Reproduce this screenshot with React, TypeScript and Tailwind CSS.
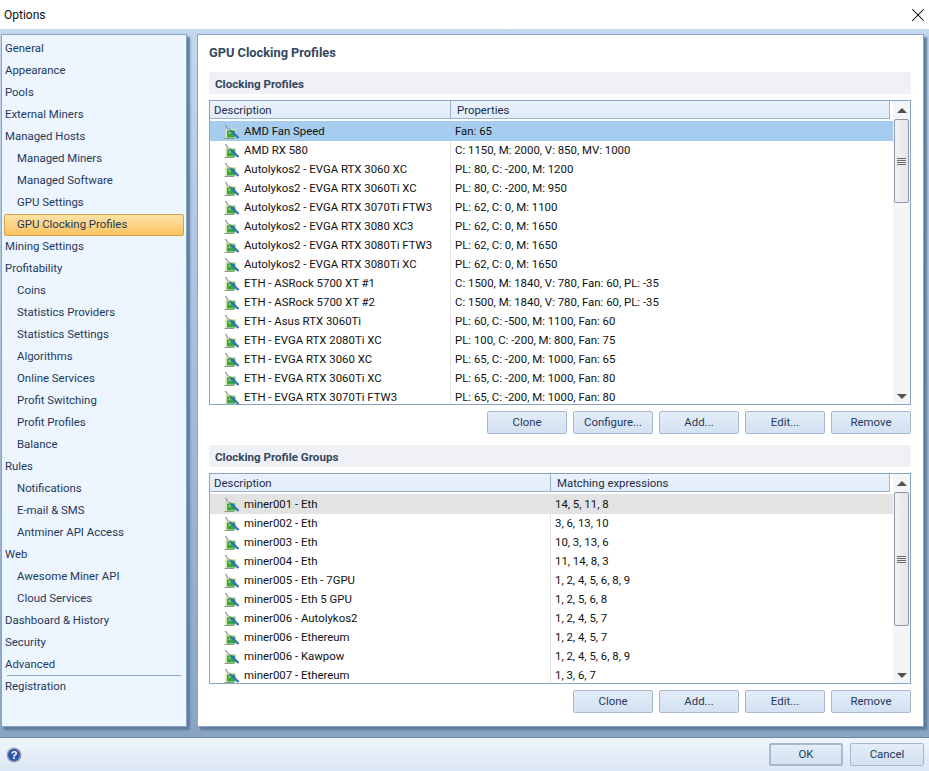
import { X } from "lucide-react";

const navItems: [string, boolean][] = [
  ["General", false],
  ["Appearance", false],
  ["Pools", false],
  ["External Miners", false],
  ["Managed Hosts", false],
  ["Managed Miners", true],
  ["Managed Software", true],
  ["GPU Settings", true],
  ["GPU Clocking Profiles", true],
  ["Mining Settings", false],
  ["Profitability", false],
  ["Coins", true],
  ["Statistics Providers", true],
  ["Statistics Settings", true],
  ["Algorithms", true],
  ["Online Services", true],
  ["Profit Switching", true],
  ["Profit Profiles", true],
  ["Balance", true],
  ["Rules", false],
  ["Notifications", true],
  ["E-mail & SMS", true],
  ["Antminer API Access", true],
  ["Web", false],
  ["Awesome Miner API", true],
  ["Cloud Services", true],
  ["Dashboard & History", false],
  ["Security", false],
  ["Advanced", false],
];

const profiles = [
  ["AMD Fan Speed", "Fan: 65"],
  ["AMD RX 580", "C: 1150, M: 2000, V: 850, MV: 1000"],
  ["Autolykos2 - EVGA RTX 3060 XC", "PL: 80, C: -200, M: 1200"],
  ["Autolykos2 - EVGA RTX 3060Ti XC", "PL: 80, C: -200, M: 950"],
  ["Autolykos2 - EVGA RTX 3070Ti FTW3", "PL: 62, C: 0, M: 1100"],
  ["Autolykos2 - EVGA RTX 3080 XC3", "PL: 62, C: 0, M: 1650"],
  ["Autolykos2 - EVGA RTX 3080Ti FTW3", "PL: 62, C: 0, M: 1650"],
  ["Autolykos2 - EVGA RTX 3080Ti XC", "PL: 62, C: 0, M: 1650"],
  ["ETH - ASRock 5700 XT #1", "C: 1500, M: 1840, V: 780, Fan: 60, PL: -35"],
  ["ETH - ASRock 5700 XT #2", "C: 1500, M: 1840, V: 780, Fan: 60, PL: -35"],
  ["ETH - Asus RTX 3060Ti", "PL: 60, C: -500, M: 1100, Fan: 60"],
  ["ETH - EVGA RTX 2080Ti XC", "PL: 100, C: -200, M: 800, Fan: 75"],
  ["ETH - EVGA RTX 3060 XC", "PL: 65, C: -200, M: 1000, Fan: 65"],
  ["ETH - EVGA RTX 3060Ti XC", "PL: 65, C: -200, M: 1000, Fan: 80"],
  ["ETH - EVGA RTX 3070Ti FTW3", "PL: 65, C: -200, M: 1000, Fan: 80"],
];

const groups = [
  ["miner001 - Eth", "14, 5, 11, 8"],
  ["miner002 - Eth", "3, 6, 13, 10"],
  ["miner003 - Eth", "10, 3, 13, 6"],
  ["miner004 - Eth", "11, 14, 8, 3"],
  ["miner005 - Eth - 7GPU", "1, 2, 4, 5, 6, 8, 9"],
  ["miner005 - Eth 5 GPU", "1, 2, 5, 6, 8"],
  ["miner006 - Autolykos2", "1, 2, 4, 5, 7"],
  ["miner006 - Ethereum", "1, 2, 4, 5, 7"],
  ["miner006 - Kawpow", "1, 2, 4, 5, 6, 8, 9"],
  ["miner007 - Ethereum", "1, 3, 6, 7"],
];

function RowIcon() {
  return (
    <svg width="16" height="16" viewBox="0 0 16 16" className="shrink-0">
      <path d="M1.5 1l3 5" stroke="#8f938f" strokeWidth="1.3" fill="none" />
      <rect x="1.5" y="5" width="10.5" height="9" fill="#d6e6a8" />
      <rect x="3" y="6.5" width="8" height="7" fill="#3aa648" />
      <path d="M4.5 8h2v2h-2z" fill="#8fd07a" />
      <path d="M0.5 14.5h10" stroke="#8d9a88" strokeWidth="1" />
      <path d="M7 6.5l7.5 7.5" stroke="#2b6fc0" strokeWidth="2.2" />
      <path d="M5 5l2 2" stroke="#7d8a9a" strokeWidth="1.4" />
    </svg>
  );
}

function Btn({ label, wide }: { label: string; wide?: boolean }) {
  return (
    <button
      className={`h-[23px] rounded-[2px] border border-[#a8b8ce] bg-gradient-to-b from-[#e4edf8] to-[#d3e1f2] pt-[1px] text-[11.4px] text-[#1e395b] ${
        wide ? "w-[74px]" : "w-[80px]"
      }`}
    >
      {label}
    </button>
  );
}

function ListTable({
  rows,
  colWidth,
  height,
  selected,
  thumb,
  second,
}: {
  rows: string[][];
  colWidth: string;
  height: string;
  selected: string;
  thumb: string;
  second: string;
}) {
  return (
    <div className={`flex ${height} border border-[#8aa4c4] bg-white`}>
      <div className="min-w-0 flex-1 overflow-hidden">
        <div className="mr-[3px] flex h-[18px] border-b border-r border-[#9db4d0] bg-gradient-to-b from-[#eaf2fb] to-[#e2edf9] text-[11.4px] leading-[19px] text-[#1c2c4a]">
          <div className={`${colWidth} shrink-0 border-r border-[#9db4d0] pl-[4px]`}>Description</div>
          <div className="pl-[6px]">{second}</div>
        </div>
        <div className="pt-[2px]">
          {rows.map((r, i) => (
            <div
              key={r[0]}
              className={`flex items-center text-[11.4px] text-[#111] ${i === 0 ? `h-[20px] pt-[1px] ${selected}` : "h-[19px] border-r-[3px] border-white"}`}
            >
              <div className={`${colWidth} flex h-full shrink-0 items-center gap-[3px] border-r border-[#e3e3e3] pl-[14px] ${i === 0 ? "border-transparent" : ""}`}>
                <RowIcon />
                <span className="ml-[1px] whitespace-nowrap">{r[0]}</span>
              </div>
              <div className="whitespace-nowrap pl-[4px]">{r[1]}</div>
            </div>
          ))}
        </div>
      </div>
      <div className="flex w-[17px] shrink-0 flex-col items-center bg-[#f4f5f7]">
        <div className="flex h-[18px] items-center justify-center">
          <div className="h-0 w-0 border-x-[5px] border-b-[5px] border-x-transparent border-b-[#505050]" />
        </div>
        <div className={`flex ${thumb} w-[15px] flex-col items-center justify-center gap-[1px] rounded-[2px] border border-[#8f99a8] bg-gradient-to-r from-[#f2f3f6] to-[#e2e5ec]`}>
          <div className="h-px w-[9px] bg-[#6b6b6b]" />
          <div className="h-px w-[9px] bg-[#6b6b6b]" />
          <div className="h-px w-[9px] bg-[#6b6b6b]" />
          <div className="h-px w-[9px] bg-[#6b6b6b]" />
        </div>
        <div className="flex flex-1 items-end pb-[5px]">
          <div className="h-0 w-0 border-x-[5px] border-t-[5px] border-x-transparent border-t-[#505050]" />
        </div>
      </div>
    </div>
  );
}

function SectionHead({ title }: { title: string }) {
  return (
    <div className="h-[22px] bg-[#eff1f6] pl-[6px] text-[11.6px] font-bold leading-[24px] text-[#33475f]">
      {title}
    </div>
  );
}

export default function App() {
  return (
    <div className="flex h-[771px] w-[929px] flex-col overflow-hidden bg-white font-['Roboto',Arial,sans-serif]">
      {/* TITLE BAR */}
      <div className="flex h-[29px] shrink-0 items-center justify-between pl-[4px] pr-0 text-[12px] text-[#111]">
        <span>Options</span>
        <X size={22} strokeWidth={1.1} className="text-black" />
      </div>

      {/* MAIN AREA */}
      <div className="flex h-[708px] shrink-0 gap-[10px] bg-gradient-to-b from-[#c3d7ef] to-[#8aa5c4] pl-[1px] pr-[5px] pt-[5px]">
        {/* SIDEBAR */}
        <div className="h-[693px] w-[186px] shrink-0 border border-[#8aa4c4] bg-[#edf5fe] pt-[3px] shadow-[3px_3px_2px_#5f7b9c] text-[11.4px] text-[#1e395b]">
          {navItems.map(([label, sub]) => (
            <div
              key={label}
              className={`flex h-[22px] items-center ${sub ? "pl-[15px]" : "pl-[3px]"} ${
                label === "GPU Clocking Profiles"
                  ? "mx-[2px] !pl-[12px] rounded-[2px] border border-[#d5a24c] bg-gradient-to-b from-[#fde3a6] to-[#fbc35f]"
                  : ""
              }`}
            >
              {label}
            </div>
          ))}
          <div className="mx-[5px] mt-[-1px] h-px bg-[#8aa4c4]" />
          <div className="flex h-[22px] items-center pl-[3px]">Registration</div>
        </div>

        {/* CONTENT */}
        <div className="h-[693px] w-[727px] shrink-0 border border-[#8aa4c4] bg-white pl-[11px] pr-[12px] pt-[10px] shadow-[3px_3px_2px_#5f7b9c]">
          <div className="h-[27px] text-[12.8px] font-bold leading-[16px] text-[#33475f]">GPU Clocking Profiles</div>
          <SectionHead title="Clocking Profiles" />
          <div className="mt-[6px]">
            <ListTable
              rows={profiles}
              colWidth="w-[241px]"
              height="h-[305px]"
              selected="bg-[#a6cdf0]"
              thumb="h-[84px]"
              second="Properties"
            />
          </div>
          <div className="mt-[6px] flex justify-end gap-[6px]">
            <Btn label="Clone" />
            <Btn label="Configure..." />
            <Btn label="Add..." />
            <Btn label="Edit..." />
            <Btn label="Remove" />
          </div>
          <div className="mt-[11px]">
            <SectionHead title="Clocking Profile Groups" />
          </div>
          <div className="mt-[6px]">
            <ListTable
              rows={groups}
              colWidth="w-[341px]"
              height="h-[211px]"
              selected="bg-[#e3e3e3]"
              thumb="h-[134px]"
              second="Matching expressions"
            />
          </div>
          <div className="mt-[6px] flex justify-end gap-[6px]">
            <Btn label="Clone" />
            <Btn label="Add..." />
            <Btn label="Edit..." />
            <Btn label="Remove" />
          </div>
        </div>
      </div>

      {/* FOOTER */}
      <div className="flex h-[34px] shrink-0 items-center justify-between border-t border-[#6f88a8] bg-gradient-to-b from-[#f0f6fc] to-[#dbe7f4] pl-[6px] pr-[5px]">
        <svg width="16" height="16" viewBox="0 0 16 16">
          <circle cx="8" cy="8" r="7.5" fill="#9aa3b0" />
          <circle cx="8" cy="8" r="6" fill="#2a55b0" />
          <text x="8" y="12" textAnchor="middle" fontSize="11" fontWeight="700" fill="#fff" fontFamily="Liberation Sans">?</text>
        </svg>
        <div className="flex gap-[7px]">
          <button className="h-[23px] w-[74px] rounded-[2px] border-2 border-[#a8b8ce] bg-gradient-to-b from-[#e4edf8] to-[#d3e1f2] text-[11.4px] text-[#1e395b]">OK</button>
          <Btn label="Cancel" wide />
        </div>
      </div>
    </div>
  );
}
